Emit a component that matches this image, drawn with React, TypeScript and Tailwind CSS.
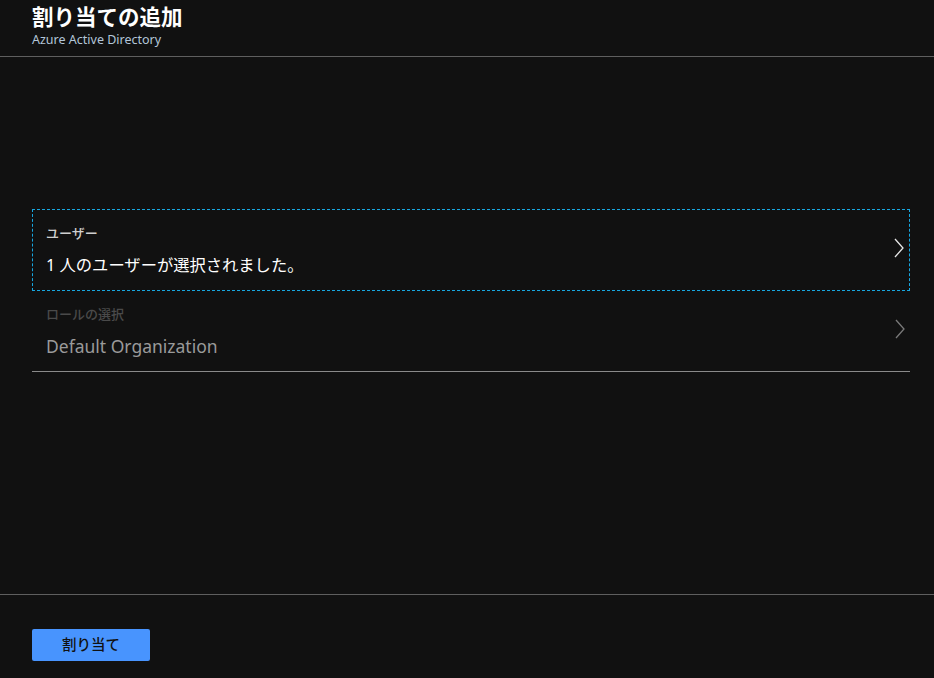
const Chevron = ({ className }: { className: string }) => (
  <svg width="12" height="20" viewBox="0 0 12 20" fill="none" className={className}>
    <path d="M2 1 L10 10 L2 19" stroke="currentColor" strokeWidth="1.3" />
  </svg>
);

const App = () => {
  return (
    <div
      className="flex h-[678px] w-[934px] flex-col bg-[#111111] text-white"
      style={{ fontFamily: '"Noto Sans", "Noto Sans CJK JP", sans-serif' }}
    >
      <header className="h-[57px] border-b border-[#5f5f5f] pl-8 pr-6 pt-[1px]">
        <h1 className="text-[21.5px] font-bold leading-[31px]">割り当ての追加</h1>
        <p className="text-[12.5px] leading-[16px] text-[#b3c6d9]">Azure Active Directory</p>
      </header>

      <main className="flex-1 pl-8 pr-6 pt-[152px]">
        <button className="flex h-[82px] w-full items-center justify-between border border-dashed border-[#18a7e0] pl-[13px] pr-[4px] text-left">
          <div className="flex flex-col">
            <span className="text-[13px] font-medium leading-[18px] text-[#cfcfcf]">ユーザー</span>
            <span className="mt-[12px] text-[16.3px] leading-[22px] text-white">
              1 人のユーザーが選択されました。
            </span>
          </div>
          <Chevron className="-mt-[4px] text-[#e6e6e6]" />
        </button>

        <div className="flex h-[81px] items-center justify-between border-b border-[#8a8a8a] pl-[14px] pr-[4px]">
          <div className="flex flex-col">
            <span className="text-[13px] font-medium leading-[18px] text-[#4a4a4a]">ロールの選択</span>
            <span className="mt-[12px] text-[17.5px] leading-[22px] text-[#9a9a9a]">Default Organization</span>
          </div>
          <Chevron className="-mt-[4px] text-[#7a7a7a]" />
        </div>
      </main>

      <footer className="h-[84px] border-t border-[#5f5f5f] px-8 pt-[34px]">
        <button className="h-[32px] w-[118px] rounded-[2px] bg-[#4894fe] text-[14.5px] font-medium text-[#111111]">
          割り当て
        </button>
      </footer>
    </div>
  );
};

export default App;
